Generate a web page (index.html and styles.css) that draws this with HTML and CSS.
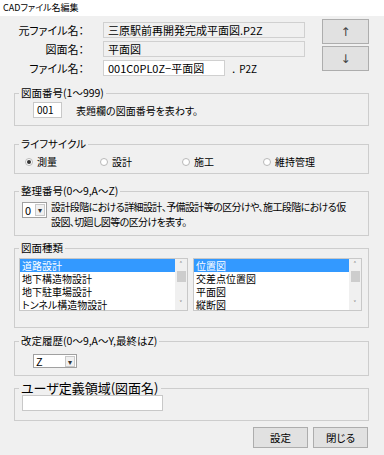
FILE: index.html
```html
<!DOCTYPE html>
<html lang="ja">
<head>
    <meta charset="UTF-8">
    <title>CADファイル名編集</title>
    <link rel="stylesheet" href="styles.css">
</head>
<body>
    <div class="titlebar">CADファイル名編集</div>

    <div class="dialog">
        <div class="top">
            <div class="names">
                <div class="row">
                    <span class="label">元ファイル名：</span>
                    <div class="field readonly">三原駅前再開発完成平面図.P2Z</div>
                </div>
                <div class="row">
                    <span class="label">図面名：</span>
                    <div class="field readonly">平面図</div>
                </div>
                <div class="row">
                    <span class="label">ファイル名：</span>
                    <div class="field edit">001C0PL0Z−平面図</div>
                    <span class="ext">． P2Z</span>
                </div>
            </div>
            <div class="arrows">
                <button class="btn arrow">↑</button>
                <button class="btn arrow">↓</button>
            </div>
        </div>

        <fieldset class="group g-number">
            <legend>図面番号(1～999)</legend>
            <div class="inline">
                <div class="box num">001</div>
                <span>表題欄の図面番号を表わす。</span>
            </div>
        </fieldset>

        <fieldset class="group g-life">
            <legend>ライフサイクル</legend>
            <div class="radios">
                <label class="radio"><span class="dot on"></span>測量</label>
                <label class="radio"><span class="dot"></span>設計</label>
                <label class="radio"><span class="dot"></span>施工</label>
                <label class="radio"><span class="dot"></span>維持管理</label>
            </div>
        </fieldset>

        <fieldset class="group g-seiri">
            <legend>整理番号(0～9,A～Z)</legend>
            <div class="inline top-align">
                <div class="combo small"><span>0</span><span class="drop">▾</span></div>
                <p class="desc">設計段階における詳細設計、予備設計等の区分けや、施工段階における仮<br>設図、切廻し図等の区分けを表す。</p>
            </div>
        </fieldset>

        <fieldset class="group g-kind">
            <legend>図面種類</legend>
            <div class="lists">
                <div class="listbox">
                    <ul>
                        <li class="sel">道路設計</li>
                        <li>地下構造物設計</li>
                        <li>地下駐車場設計</li>
                        <li>トンネル構造物設計</li>
                    </ul>
                    <div class="scroll"><span class="up">˄</span><span class="thumb"></span><span class="down">˅</span></div>
                </div>
                <div class="listbox">
                    <ul>
                        <li class="sel">位置図</li>
                        <li>交差点位置図</li>
                        <li>平面図</li>
                        <li>縦断図</li>
                    </ul>
                    <div class="scroll"><span class="up">˄</span><span class="thumb"></span><span class="down">˅</span></div>
                </div>
            </div>
        </fieldset>

        <fieldset class="group g-rev">
            <legend>改定履歴(0～9,A～Y,最終はZ)</legend>
            <div class="combo wide"><span>Z</span><span class="drop">▾</span></div>
        </fieldset>

        <fieldset class="group g-user">
            <legend>ユーザ定義領域(図面名)</legend>
            <div class="box user"></div>
        </fieldset>

        <div class="actions">
            <button class="btn act">設定</button>
            <button class="btn act">閉じる</button>
        </div>
    </div>
</body>
</html>
```

FILE: styles.css
```css
body {
    margin: 0;
    width: 384px;
    height: 455px;
    background: #f0f0f0;
    font-family: "Noto Sans CJK JP", "Noto Sans", sans-serif;
    font-size: 10px;
    font-feature-settings: "palt";
    color: #000;
    overflow: hidden;
}

.titlebar {
    height: 16px;
    line-height: 16px;
    background: #fff;
    padding-left: 3px;
    font-size: 9px;
}

.dialog {
    padding: 0 15px 0 14px;
}

/* file name rows */
.top {
    display: flex;
    justify-content: space-between;
}

.names {
    display: flex;
    flex-direction: column;
    gap: 3px;
    padding-top: 6px;
}

.row {
    display: flex;
    align-items: center;
    height: 16px;
}

.label {
    width: 70px;
    text-align: right;
    font-size: 11px;
    margin-right: 19px;
}

.field {
    height: 16px;
    line-height: 15px;
    box-sizing: border-box;
    padding-left: 4px;
    font-size: 11px;
    white-space: nowrap;
}

.readonly {
    width: 202px;
    border: 1px solid #d0d0d0;
    background: #f0f0f0;
}

.edit {
    width: 122px;
    border: 1px solid #d0d0d0;
    background: #fff;
}

.ext {
    margin-left: 7px;
    font-size: 10px;
}

.arrows {
    display: flex;
    flex-direction: column;
    gap: 2px;
    padding-top: 3px;
}

.btn {
    font-family: inherit;
    font-feature-settings: "palt";
    background: #e1e1e1;
    border: 1px solid #adadad;
    padding: 0;
    color: #000;
}

.arrow {
    width: 47px;
    height: 25px;
    font-size: 12px;
    font-family: "DejaVu Sans", sans-serif;
    color: #444;
}

/* group boxes: legend sits on the left border, content gets its own margin */
.group {
    margin: 0;
    padding: 0;
    min-width: 0;
    border: 1px solid #cdcdcd;
}

.group legend {
    margin-left: 4px;
    padding: 0 2px;
    line-height: 14px;
    font-size: 10.5px;
}

.g-number {
    margin-top: 10px;
    padding: 2px 0 7px;
}

.inline {
    display: flex;
    align-items: center;
}

.top-align {
    align-items: flex-start;
}

.box {
    box-sizing: border-box;
    height: 16px;
    background: #fff;
    border: 1px solid #c8c8c8;
    line-height: 14px;
}

.num {
    width: 29px;
    padding-left: 3px;
    margin-left: 18px;
    margin-right: 14px;
}

.g-life {
    margin-top: 11px;
    padding: 3px 0 5px;
}

.radios {
    display: grid;
    grid-template-columns: 75px 82px 81px auto;
    height: 14px;
    align-items: center;
    margin-left: 10px;
}

.radio {
    display: flex;
    align-items: center;
    gap: 4px;
}

.dot {
    width: 6px;
    height: 6px;
    border: 1px solid #b8b8b8;
    border-radius: 50%;
    background: #fff;
    position: relative;
}

.dot.on::after {
    content: "";
    position: absolute;
    left: 1px;
    top: 1px;
    width: 4px;
    height: 4px;
    border-radius: 50%;
    background: #333;
}

.g-seiri {
    margin-top: 10px;
    padding: 1px 0 6px;
}

.combo {
    box-sizing: border-box;
    display: flex;
    justify-content: space-between;
    align-items: center;
    background: #fff;
    border: 1px solid #a0a0a0;
    padding-left: 2px;
}

.combo.small {
    width: 25px;
    height: 16px;
    margin: 3px 4px 0 7px;
    font-size: 11px;
}

.drop {
    width: 10px;
    height: 12px;
    margin-right: 1px;
    background: #f0f0f0;
    border: 1px solid #c8c8c8;
    box-sizing: border-box;
    font-size: 8px;
    line-height: 10px;
    text-align: center;
    color: #333;
}

.desc {
    margin: 0;
    line-height: 15px;
    white-space: nowrap;
    letter-spacing: -0.6px;
}

.g-kind {
    margin-top: 5px;
    padding: 3px 0 16px;
}

.lists {
    display: flex;
    gap: 5px;
    margin-left: 4px;
}

.listbox {
    display: flex;
    box-sizing: border-box;
    width: 169px;
    height: 53px;
    background: #fff;
    border: 1px solid #c8c8c8;
}

.listbox ul {
    list-style: none;
    margin: 0;
    padding: 0;
    flex: 1;
}

.listbox li {
    height: 13px;
    line-height: 13px;
    padding-left: 2px;
    font-size: 10px;
    white-space: nowrap;
    overflow: hidden;
}

.listbox li.sel {
    background: #3399ff;
    color: #fff;
}

.scroll {
    width: 12px;
    background: #f0f0f0;
    display: flex;
    flex-direction: column;
    align-items: center;
    font-size: 8px;
    line-height: 12px;
    color: #555;
}

.thumb {
    width: 9px;
    height: 11px;
    background: #cdcdcd;
}

.down {
    margin-top: auto;
}

.g-rev {
    margin-top: 6px;
    padding: 6px 0 7px;
}

.combo.wide {
    width: 44px;
    height: 14px;
    margin-left: 18px;
    font-size: 11px;
}

.combo.wide .drop {
    height: 11px;
    line-height: 9px;
}

.g-user {
    margin-top: 5px;
    padding: 0 0 9px;
}

.g-user legend {
    font-size: 13px;
}

.user {
    width: 141px;
    margin-left: 7px;
}

.actions {
    display: flex;
    justify-content: flex-end;
    gap: 5px;
    margin-top: 6px;
    padding-right: 1px;
}

.act {
    width: 55px;
    height: 21px;
    font-size: 10.5px;
}
```
